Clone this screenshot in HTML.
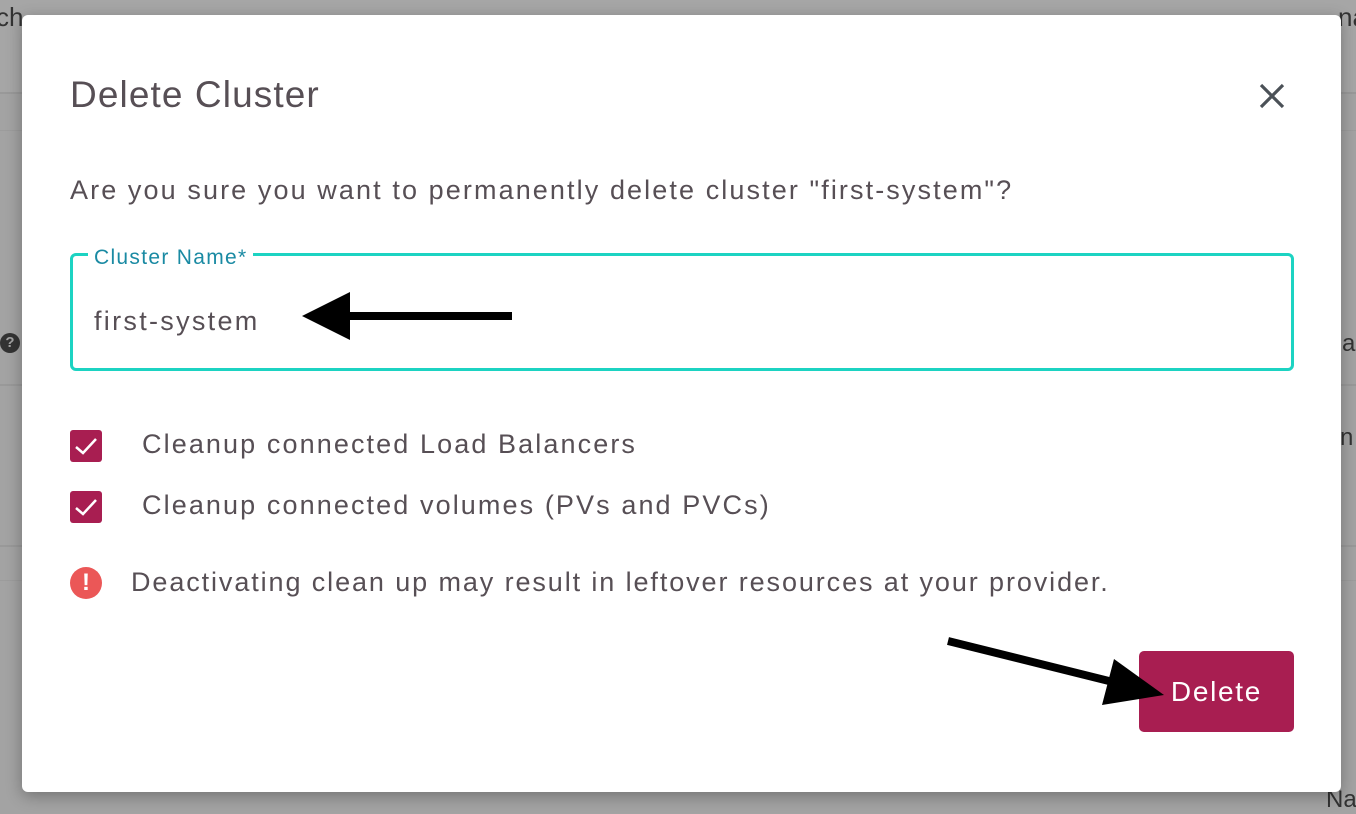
<!DOCTYPE html>
<html><head><meta charset="utf-8"><style>
body{margin:0;width:1356px;height:810px;background:#a3a3a3;position:relative;overflow:hidden;font-family:"Liberation Sans",sans-serif;color:#574f55}
.bg{position:absolute;left:0;width:1356px}
.modal{position:absolute;left:22px;top:15px;width:1319px;height:777px;background:#fff;border-radius:6px;box-shadow:0 4px 16px rgba(0,0,0,.3)}
.t{position:absolute;white-space:nowrap}
.s{letter-spacing:2.1px}
.cb{position:absolute;left:48px;width:32px;height:32px;background:#a81e51;border-radius:3px}
</style></head><body>
<div class="bg" style="top:0;height:92px;background:#a6a6a6"></div>
<div class="bg" style="top:92px;height:2px;background:#999"></div>
<div class="bg" style="top:130px;height:1px;background:#9c9c9c"></div>
<div class="bg" style="top:384px;height:2px;background:#999"></div>
<div class="bg" style="top:545px;height:2px;background:#999"></div>
<div class="bg" style="top:580px;height:1px;background:#9c9c9c"></div>
<div class="t" style="left:-4px;top:2px;font-size:26px;color:#333">ch</div>
<div class="t" style="left:1338px;top:2px;font-size:26px;color:#333">na</div>
<div class="t" style="left:0;top:333px;width:20px;height:20px;border-radius:50%;background:#333;color:#a3a3a3;font-size:15px;font-weight:bold;text-align:center;line-height:20px">?</div>
<div class="t" style="left:1342px;top:330px;font-size:24px;color:#333">a</div>
<div class="t" style="left:1340px;top:424px;font-size:24px;color:#333">n</div>
<div class="t" style="left:1326px;top:786px;font-size:24px;color:#333">Na</div>
<div class="modal">
<div class="t" style="left:48px;top:59px;font-size:37px;letter-spacing:1.1px;color:#574f55">Delete Cluster</div>
<svg class="t" style="left:1237px;top:68px" width="26" height="26" viewBox="0 0 26 26"><path d="M2 2L24 24M24 2L2 24" stroke="#4b5157" stroke-width="3.2"/></svg>
<div class="t s" style="left:48px;top:160px;font-size:27px">Are you sure you want to permanently delete cluster "first-system"?</div>
<div class="t" style="left:48px;top:238px;width:1218px;height:112px;border:3px solid #1cd3c2;border-radius:6px"></div>
<div class="t" style="left:66px;top:231px;padding:0 6px;background:#fff;font-size:21px;letter-spacing:1.3px;color:#1a8aa3">Cluster Name*</div>
<div class="t" style="left:72px;top:291px;font-size:27px;letter-spacing:2.3px">first-system</div>
<svg class="t" style="left:278px;top:275px" width="215" height="52" viewBox="0 0 215 52"><path d="M212 26H40" stroke="#000" stroke-width="8"/><path d="M2 26L50 2L50 50Z" fill="#000"/></svg>
<div class="cb" style="top:415px"><svg width="32" height="32"><path d="M6 17L13 23L26 9" stroke="#fff" stroke-width="2.5" fill="none"/></svg></div>
<div class="t s" style="left:120px;top:414px;font-size:27px">Cleanup connected Load Balancers</div>
<div class="cb" style="top:476px"><svg width="32" height="32"><path d="M6 17L13 23L26 9" stroke="#fff" stroke-width="2.5" fill="none"/></svg></div>
<div class="t s" style="left:120px;top:475px;font-size:27px">Cleanup connected volumes (PVs and PVCs)</div>
<div class="t" style="left:48px;top:552px;width:32px;height:32px;border-radius:50%;background:#eb5757;color:#fff;font-size:24px;font-weight:bold;text-align:center;line-height:32px">!</div>
<div class="t" style="left:109px;top:552px;font-size:27px;letter-spacing:1.9px">Deactivating clean up may result in leftover resources at your provider.</div>
<div class="t" style="left:1117px;top:636px;width:155px;height:81px;background:#a81e51;border-radius:5px;color:#fff;font-size:28px;letter-spacing:1.7px;text-align:center;line-height:81px">Delete</div>
<svg class="t" style="left:920px;top:618px" width="230" height="75" viewBox="0 0 230 75"><path d="M6 8L175 50" stroke="#000" stroke-width="8"/><path d="M222 62L160 72L172 26Z" fill="#000"/></svg>
</div>
</body></html>
